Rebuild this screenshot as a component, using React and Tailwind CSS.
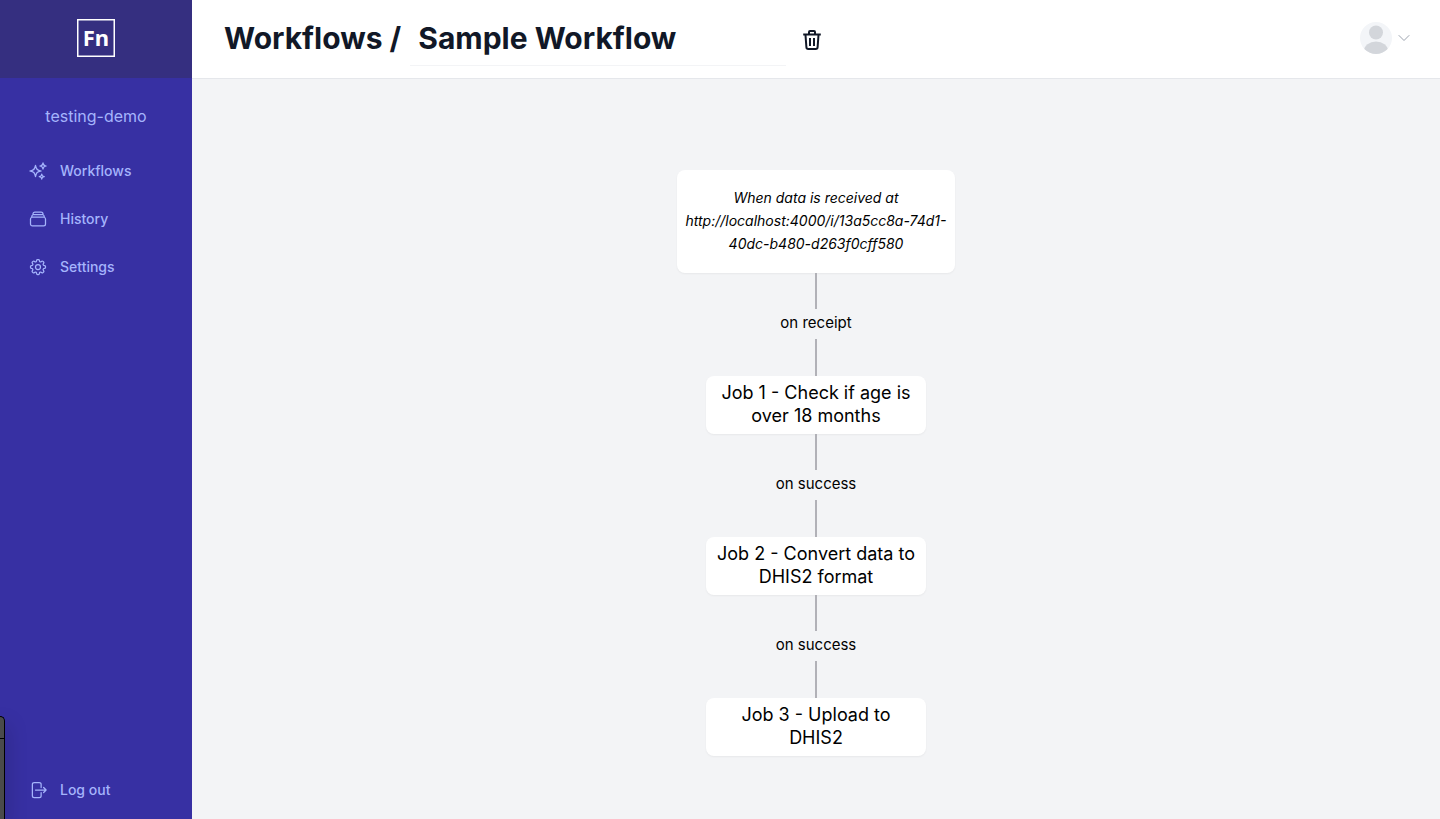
import React from "react";
import {
  HiOutlineSparkles,
  HiOutlineRectangleStack,
  HiOutlineCog8Tooth,
  HiOutlineArrowRightOnRectangle,
  HiOutlineChevronDown,
} from "react-icons/hi2";

const navItems = [
  { label: "Workflows", Icon: HiOutlineSparkles },
  { label: "History", Icon: HiOutlineRectangleStack },
  { label: "Settings", Icon: HiOutlineCog8Tooth },
];

const steps = [
  { condition: "on receipt", job: "Job 1 - Check if age is over 18 months" },
  { condition: "on success", job: "Job 2 - Convert data to DHIS2 format" },
  { condition: "on success", job: "Job 3 - Upload to DHIS2" },
];

function NavLink({ label, Icon }) {
  return (
    <a href="#" className="flex h-8 items-center gap-3 px-2 text-sm font-medium text-[#a5b4fc]">
      <Icon className="size-5" aria-hidden="true" />
      {label}
    </a>
  );
}

function Sidebar() {
  return (
    <aside className="relative flex w-48 shrink-0 flex-col bg-[#3730a3]">
      <div className="flex h-[78px] items-center justify-center bg-[#352f80] pb-0.5">
        <svg className="size-[38px]" viewBox="0 0 38 38" role="img" aria-label="Fn">
          <rect x="0.75" y="0.75" width="36.5" height="36.5" fill="none" stroke="#fff" strokeWidth="1.5" />
          <text x="19" y="27" textAnchor="middle" fill="#fff" fontSize="22" fontWeight="700" fontFamily="Noto Sans, sans-serif">
            Fn
          </text>
        </svg>
      </div>
      <p className="mt-[26px] text-center text-base text-[#a5b4fc]">testing-demo</p>
      <nav className="mt-[27px] flex flex-col gap-4 px-5">
        {navItems.map((item) => (
          <NavLink key={item.label} {...item} />
        ))}
      </nav>
      <div className="mt-auto px-5 pb-[13px]">
        <NavLink label="Log out" Icon={HiOutlineArrowRightOnRectangle} />
      </div>
      <div
        aria-hidden="true"
        className="absolute bottom-0 left-0 h-[103px] w-[5px] rounded-tr-md border-t border-r border-black bg-[#4a4b4b] shadow-[0_8px_20px_rgba(0,0,0,0.4)]"
      >
        <div className="h-[22px] border-b border-black" />
      </div>
    </aside>
  );
}

function Header() {
  return (
    <header className="flex h-[79px] items-center border-b border-[#e5e7eb] bg-white pr-7 pb-0.5 pl-8 text-[#111827]">
      <h1 className="text-3xl font-bold whitespace-pre">Workflows /</h1>
      <input
        aria-label="Workflow name"
        defaultValue="Sample Workflow"
        className="ml-[9px] h-[55px] w-[376px] border-b border-[#f3f4f6] px-2 text-3xl font-bold outline-none"
      />
      <button type="button" aria-label="Delete workflow" className="mt-1 ml-[14px]">
        <svg
          className="size-6"
          viewBox="0 0 24 24"
          fill="none"
          stroke="currentColor"
          strokeWidth="2"
          strokeLinejoin="round"
          aria-hidden="true"
        >
          <path d="M3.200 6.500h17.600M9 6V4a1 1 0 0 1 1-1h4a1 1 0 0 1 1 1v2M5.500 7l.9 12.300a1.800 1.800 0 0 0 1.800 1.700h7.600a1.800 1.800 0 0 0 1.800-1.700L18.500 7M10 10v8M14 10v8" />
        </svg>
      </button>
      <button type="button" aria-label="Account menu" className="ml-auto flex items-center gap-1">
        <svg className="size-8" viewBox="0 0 32 32" aria-hidden="true">
          <clipPath id="avatar">
            <circle cx="16" cy="16" r="16" />
          </clipPath>
          <g clipPath="url(#avatar)">
            <rect width="32" height="32" fill="#f3f5f8" />
            <circle cx="16" cy="10.500" r="7" fill="#d3d6db" />
            <ellipse cx="16" cy="28.500" rx="12" ry="9" fill="#d3d6db" />
          </g>
        </svg>
        <HiOutlineChevronDown className="size-4 text-[#9ca3af]" aria-hidden="true" />
      </button>
    </header>
  );
}

function Edge({ label }) {
  return (
    <>
      <div className="h-9 w-[2px] bg-[#b1b1b7]" />
      <div className="flex h-[30px] items-center pb-0.5 text-[15px]">{label}</div>
      <div className="h-[37px] w-[2px] bg-[#b1b1b7]" />
    </>
  );
}

export default function App() {
  return (
    <div className="flex min-h-screen font-[Inter,sans-serif]">
      <Sidebar />
      <div className="flex min-w-0 flex-1 flex-col">
        <Header />
        <main className="flex flex-1 flex-col items-center bg-[#f3f4f6] pt-[91px] text-black">
          <div className="flex h-[103px] w-[278px] items-center justify-center rounded-lg bg-white px-1 pb-0.5 text-center text-sm leading-[23px] italic shadow-xs">
            <p>
              When data is received at
              <br />
              http://localhost:4000/i/13a5cc8a-74d1-
              <br />
              40dc-b480-d263f0cff580
            </p>
          </div>
          {steps.map(({ condition, job }) => (
            <React.Fragment key={job}>
              <Edge label={condition} />
              <div className="flex h-[58px] w-[220px] items-center justify-center rounded-lg bg-white px-2 pb-0.5 text-center text-lg leading-[23px] shadow-xs">
                {job}
              </div>
            </React.Fragment>
          ))}
        </main>
      </div>
    </div>
  );
}
